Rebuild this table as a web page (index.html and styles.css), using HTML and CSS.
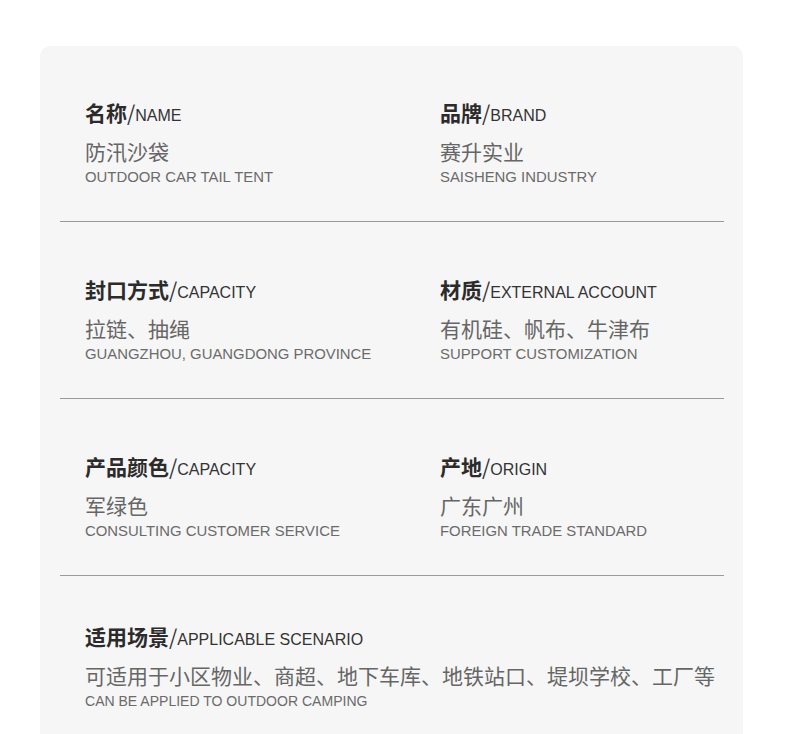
FILE: index.html
```html
<!DOCTYPE html>
<html>
<head>
<meta charset="utf-8">
<link rel="stylesheet" href="styles.css">
</head>
<body>
<div class="card">
  <div class="row row-first">
    <div class="cell">
      <div class="title"><b>名称</b>/<span class="en">NAME</span></div>
      <div class="value">防汛沙袋</div>
      <div class="sub">OUTDOOR CAR TAIL TENT</div>
    </div>
    <div class="cell">
      <div class="title"><b>品牌</b>/<span class="en">BRAND</span></div>
      <div class="value">赛升实业</div>
      <div class="sub">SAISHENG INDUSTRY</div>
    </div>
  </div>
  <div class="row">
    <div class="cell">
      <div class="title"><b>封口方式</b>/<span class="en">CAPACITY</span></div>
      <div class="value">拉链、抽绳</div>
      <div class="sub">GUANGZHOU, GUANGDONG PROVINCE</div>
    </div>
    <div class="cell">
      <div class="title"><b>材质</b>/<span class="en">EXTERNAL ACCOUNT</span></div>
      <div class="value">有机硅、帆布、牛津布</div>
      <div class="sub">SUPPORT CUSTOMIZATION</div>
    </div>
  </div>
  <div class="row">
    <div class="cell">
      <div class="title"><b>产品颜色</b>/<span class="en">CAPACITY</span></div>
      <div class="value">军绿色</div>
      <div class="sub">CONSULTING CUSTOMER SERVICE</div>
    </div>
    <div class="cell">
      <div class="title"><b>产地</b>/<span class="en">ORIGIN</span></div>
      <div class="value">广东广州</div>
      <div class="sub">FOREIGN TRADE STANDARD</div>
    </div>
  </div>
  <div class="row row-last">
    <div class="cell wide">
      <div class="title"><b>适用场景</b>/<span class="en">APPLICABLE SCENARIO</span></div>
      <div class="value">可适用于小区物业、商超、地下车库、地铁站口、堤坝学校、工厂等</div>
      <div class="sub"><span class="narrow">CAN BE APPLIED TO OUTDOOR CAMPING</span></div>
    </div>
  </div>
</div>
</body>
</html>
```

FILE: styles.css
```css
html, body {
  margin: 0;
  padding: 0;
  background: #ffffff;
}
body {
  font-family: "Noto Sans CJK SC", "Liberation Sans", sans-serif;
  height: 734px;
  overflow: hidden;
}
.card {
  margin: 46px 0 0 40px;
  width: 703px;
  height: 700px;
  background: #f6f6f6;
  border-radius: 10px 10px 0 0;
  padding: 0 19px 0 20px;
  box-sizing: border-box;
}
.row {
  display: grid;
  grid-template-columns: 355px 1fr;
  padding: 54px 0 35px 25px;
  border-bottom: 1px solid #9a9a9a;
}
.row-first {
  padding-top: 53px;
}
.row-last {
  border-bottom: none;
  padding-top: 47px;
}
.wide {
  grid-column: 1 / 3;
}
.title {
  font-size: 21px;
  line-height: 26px;
  height: 26px;
  color: #333;
}
.title b {
  font-weight: 700;
  color: #2b2b2b;
}
.title .en {
  font-family: "Liberation Sans", "Noto Sans", sans-serif;
  font-size: 16px;
  color: #333;
}
.value {
  margin-top: 13px;
  font-size: 21px;
  line-height: 26px;
  color: #666;
  white-space: nowrap;
}
.sub {
  margin-top: 4px;
  font-family: "Liberation Sans", "Noto Sans", sans-serif;
  font-size: 14.9px;
  line-height: 18px;
  color: #6b6b6b;
  white-space: nowrap;
}
.narrow {
  display: inline-block;
  font-size: 15.5px;
  transform: scaleX(0.905);
  transform-origin: left center;
}
```
